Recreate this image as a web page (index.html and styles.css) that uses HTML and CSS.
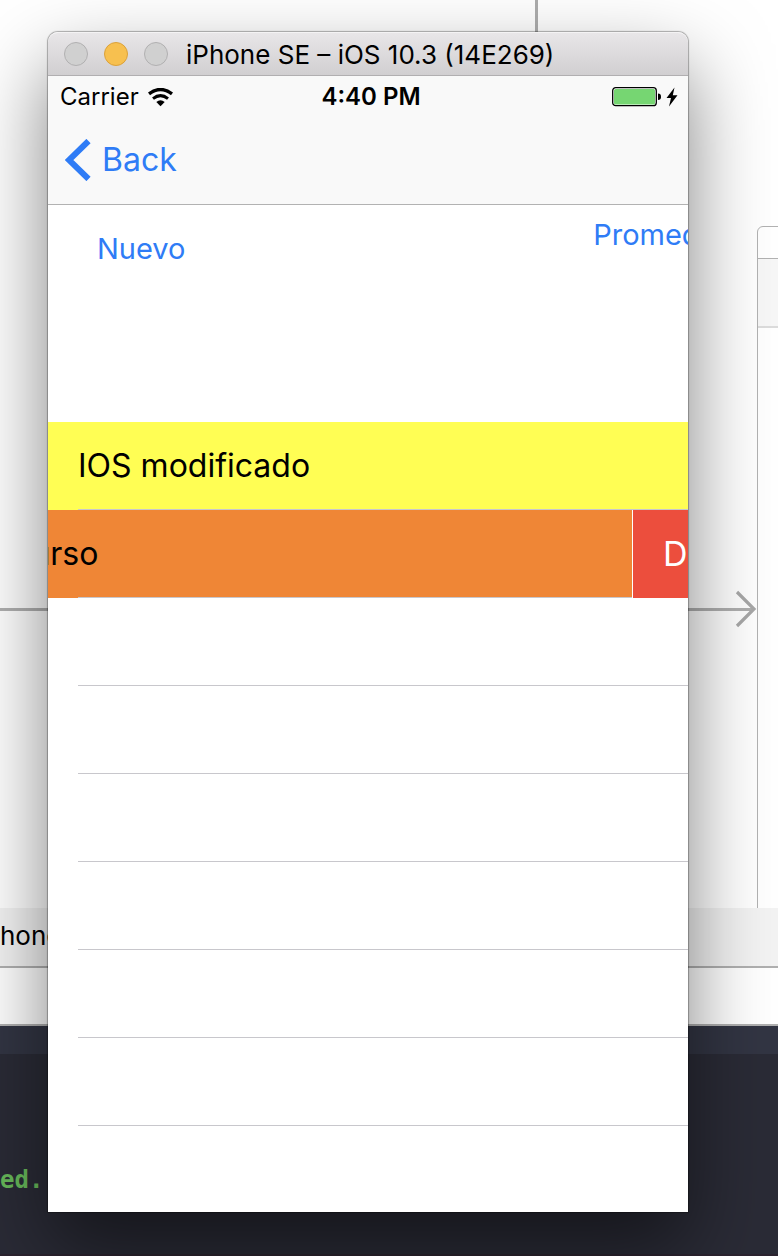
FILE: index.html
```html
<!DOCTYPE html>
<html lang="es">
<head>
<meta charset="utf-8">
<title>iPhone SE – iOS 10.3 (14E269)</title>
<link rel="stylesheet" href="styles.css">
</head>
<body>
<div class="desktop">
  <div class="canvas">
    <div class="segue-top"></div>
    <div class="segue-line"></div>
    <svg class="segue-head" width="22" height="38" viewBox="0 0 22 38" aria-hidden="true"><path d="M2 2 L19 19 L2 36" fill="none" stroke="#a8a8a8" stroke-width="3.2"/></svg>
    <div class="scene">
      <div class="scene-status"></div>
      <div class="scene-nav"></div>
    </div>
  </div>
  <div class="device-bar">hone</div>
  <div class="debug-bar"></div>
  <div class="console-head"></div>
  <div class="console">ed.</div>
</div>

<main class="window">
  <header class="titlebar">
    <div class="lights">
      <button class="light" aria-label="Close"></button>
      <button class="light light-min" aria-label="Minimize"></button>
      <button class="light" aria-label="Zoom"></button>
    </div>
    <h1 class="title">iPhone SE – iOS 10.3 (14E269)</h1>
  </header>
  <div class="screen">
    <div class="status">
      <div class="status-left">
        <span>Carrier</span>
        <svg width="25" height="19" viewBox="0 0 25 19" aria-hidden="true"><path d="M1 5.800 Q12.500 -2.800 24 5.800" fill="none" stroke="#000" stroke-width="3.400"/><path d="M5 10.600 Q12.500 4.600 20 10.600" fill="none" stroke="#000" stroke-width="3"/><path d="M8.300 14 Q12.500 10.400 16.700 14 L12.500 18.200 Z"/></svg>
      </div>
      <span class="clock">4:40 PM</span>
      <div class="status-right">
        <svg width="50" height="20" viewBox="0 0 50 20" aria-hidden="true"><rect x=".7" y=".7" width="43.600" height="18" rx="3" fill="#fff" stroke="#000" stroke-width="1.300"/><rect x="2" y="2" width="41" height="15.400" rx="1.500" fill="#76d672"/><path d="M46 6.500 Q49 6.500 49 9.700 Q49 13 46 13 Z"/></svg>
        <svg width="12" height="20" viewBox="0 0 12 20" aria-hidden="true"><path d="M8.500 0.500 L0.500 11 L5 11 L3 19.500 L11.500 8.200 L6.800 8.200 Z"/></svg>
      </div>
    </div>
    <nav class="navbar">
      <button class="back">
        <svg width="26" height="42" viewBox="0 0 26 42" aria-hidden="true"><path d="M23.500 2 L4 21 L23.500 40" fill="none" stroke="#2f7cf6" stroke-width="6"/></svg>
        <span>Back</span>
      </button>
    </nav>
    <div class="actions">
      <button class="action action-new">Nuevo</button>
      <button class="action action-avg">Promedio</button>
    </div>
    <ul class="list">
      <li class="row row-yellow"><span class="cell">IOS modificado</span></li>
      <li class="row row-swiped"><span class="cell">Curso</span><button class="delete">Delete</button></li>
      <li class="row"></li>
      <li class="row"></li>
      <li class="row"></li>
      <li class="row"></li>
      <li class="row"></li>
      <li class="row"></li>
      <li class="row row-last"></li>
    </ul>
  </div>
</main>
</body>
</html>
```
FILE: styles.css
```css
* { box-sizing: border-box; }
body {
  margin: 0;
  position: relative;
  min-height: 100vh;
  overflow: hidden;
  font-family: Inter, "Liberation Sans", sans-serif;
  color: #000;
}
button { border: 0; padding: 0; background: none; font: inherit; }
svg { display: block; flex: none; }

/* Editor behind the simulator */
.desktop { display: flex; flex-direction: column; min-height: 100vh; }
.canvas { position: relative; height: 908px; background: #fff; overflow: hidden; }
.segue-top { position: absolute; left: 535px; top: 0; width: 3px; height: 40px; background: #adadad; }
.segue-line { position: absolute; left: 0; right: 24px; top: 608px; height: 3px; background: #b0b0b0; }
.segue-head { position: absolute; right: 21px; top: 590px; }
.scene {
  position: absolute; right: -200px; width: 221px; top: 226px; bottom: -20px;
  border: 1px solid #b2b2b2; border-radius: 6px; background: #fff; overflow: hidden;
}
.scene-status { height: 32px; border-bottom: 1px solid #b2b2b2; }
.scene-nav { height: 69px; background: #f7f7f7; border-bottom: 2px solid #dcdcdc; }
.device-bar {
  height: 60px; padding-top: 12px;
  background: #f3f3f3; border-bottom: 2px solid #b0b0b0;
  font-size: 26px; line-height: 32px;
}
.debug-bar { height: 58px; background: #fff; border-bottom: 2px solid #b0b0b0; }
.console-head { height: 28px; background: #323543; }
.console {
  flex: 1; padding-top: 112px; background: #2a2b36; border-bottom: 2px solid #2c2430;
  color: #67b95a; font: bold 24px/28px "DejaVu Sans Mono", monospace;
}

/* Simulator window */
.window {
  position: absolute; left: 48px; right: 90px; top: 32px;
  border-radius: 10px 10px 0 0;
  box-shadow: 0 0 1px 1px rgba(0,0,0,.3), 0 36px 80px rgba(0,0,0,.5);
}
.titlebar {
  display: flex; align-items: center; gap: 18px;
  height: 44px; padding: 0 16px;
  border-radius: 10px 10px 0 0;
  border-top: 1px solid #f4f3f4; border-bottom: 1px solid #b1afb1;
  background: linear-gradient(#e8e6e8, #d1cfd1);
}
.lights { display: flex; gap: 16px; }
.light { width: 24px; height: 24px; border-radius: 50%; border: 1px solid #b1b0b1; background: #d0d0d0; }
.light-min { background: #f7c04f; border-color: #dba13a; }
.title { margin: 0; padding-top: 2px; font-size: 26px; font-weight: 400; line-height: 32px; white-space: nowrap; }
.screen { overflow: hidden; background: #fff; }

.status {
  display: grid; grid-template-columns: 1fr auto 1fr; align-items: center;
  height: 40px; padding: 2px 10px 0 12px; background: #f9f9f9; font-size: 24px; line-height: 28px;
}
.status-left, .status-right { display: flex; align-items: center; gap: 9px; }
.status-right { justify-content: flex-end; gap: 4px; }
.clock { padding-left: 4px; font-weight: 600; }
.navbar { height: 89px; padding: 22px 17px 0; background: #f9f9f9; border-bottom: 1px solid #b2b2b2; }
.back { display: flex; align-items: center; gap: 11px; color: #2f7cf6; font-size: 32px; line-height: 44px; }

.actions {
  display: flex; justify-content: space-between; align-items: flex-start;
  height: 217px; padding: 12px 0 0 49px;
}
.action { color: #2f7cf6; font-size: 29px; line-height: 36px; }
.action-new { margin-top: 14px; }
.action-avg { margin-right: -36px; }

.list { margin: 0; padding: 0; list-style: none; }
.row { position: relative; display: flex; align-items: center; height: 88px; font-size: 32px; line-height: 40px; }
.row::after { content: ""; position: absolute; left: 30px; right: 0; bottom: 0; height: 1px; background: #c8c7cc; }
.cell { flex: 1; padding-left: 30px; }
.row-yellow { background: #fffe54; }
.row-swiped { background: #ef8636; }
.row-swiped .cell { padding: 0; margin-left: -40px; }
.row-swiped::after { right: 56px; }
.delete {
  width: 144px; height: 88px; margin-right: -88px;
  border-left: 1px solid #fff; background: #ec4e3d; color: #fff; font-size: 34px; text-align: left; padding-left: 30px;
}
.row-last { height: 86px; }
.row-last::after { display: none; }
```
